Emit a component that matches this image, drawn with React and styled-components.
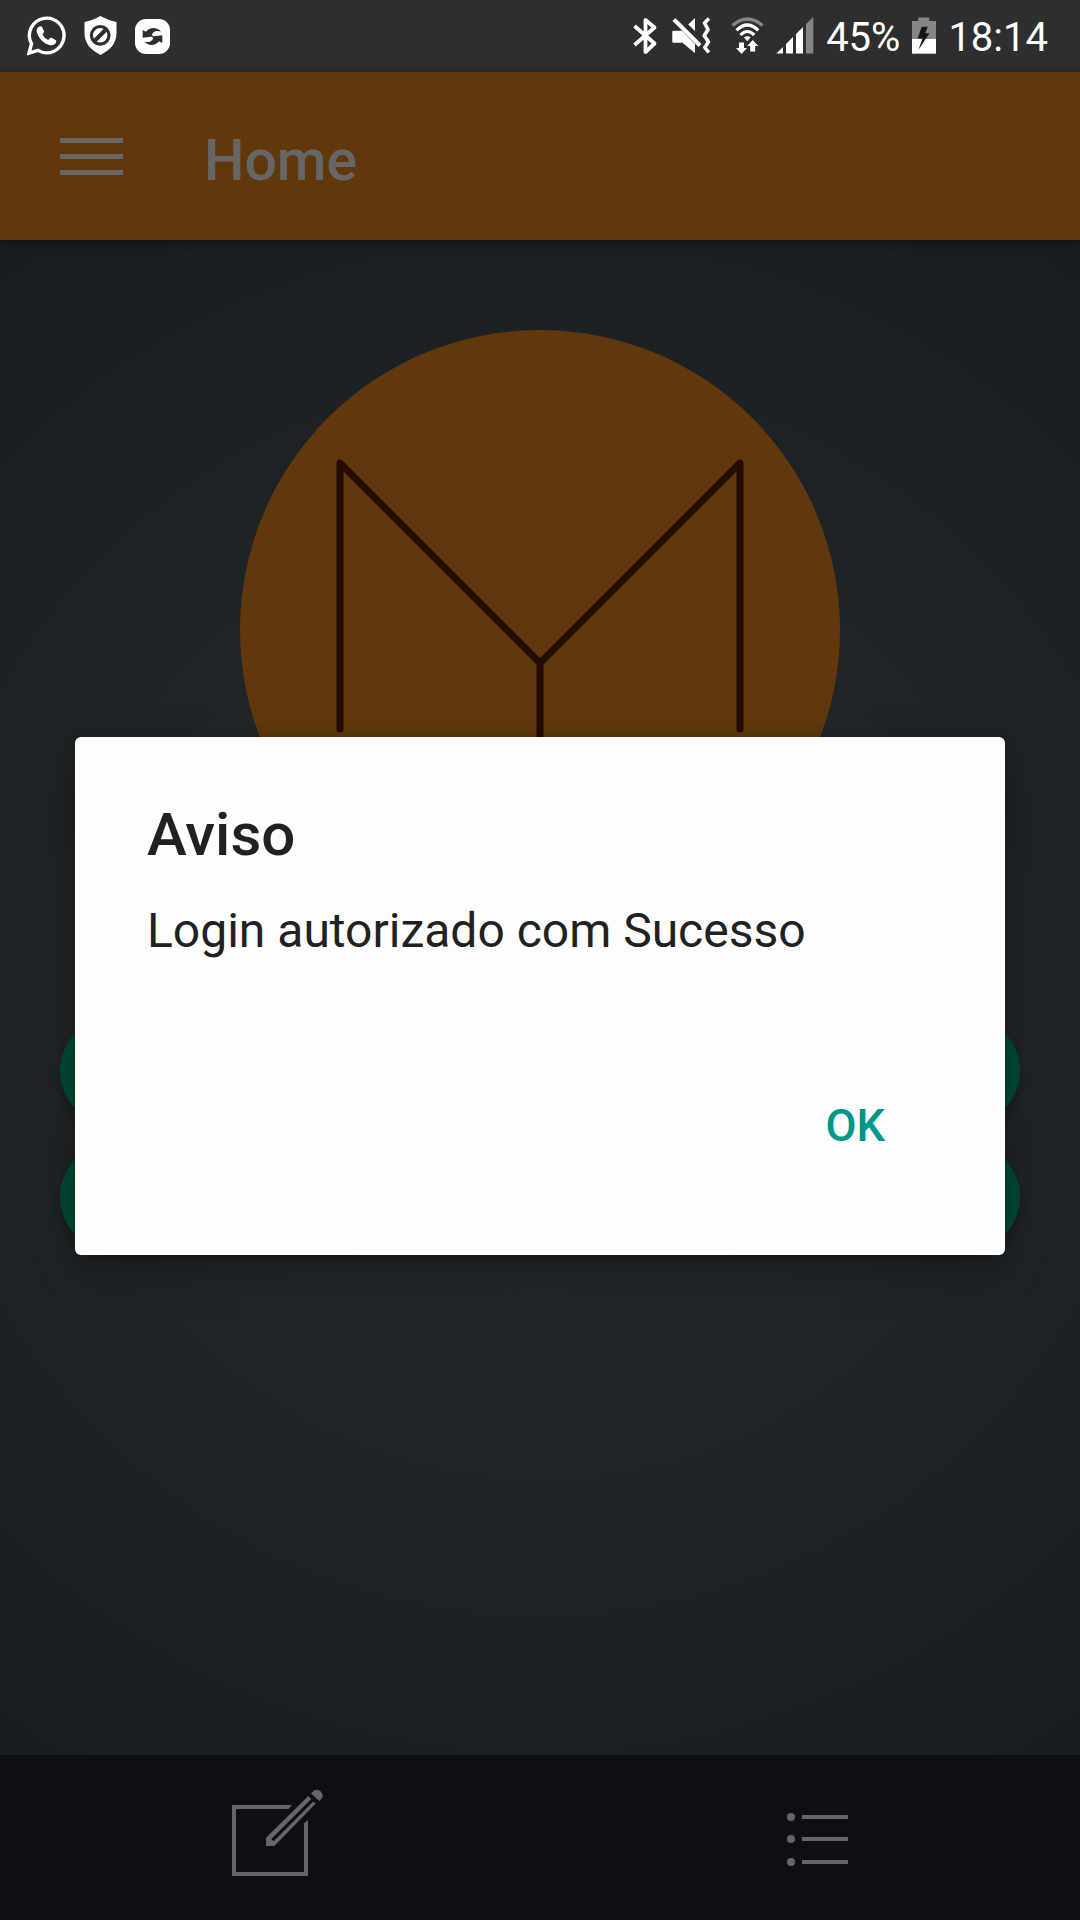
import React from "react";
import styled, { createGlobalStyle } from "styled-components";

const GlobalStyle = createGlobalStyle`
  * { box-sizing: border-box; }
  body { margin: 0; background: #181d20; font-family: Roboto, "Noto Sans", sans-serif; }
  button { font-family: inherit; border: 0; padding: 0; background: none; }
  svg { display: block; flex: none; }
`;

const Screen = styled.div`
  display: flex;
  flex-direction: column;
  min-height: 100vh;
`;

const StatusBar = styled.div`
  display: flex;
  justify-content: space-between;
  height: 72px;
  padding: 0 32px 0 27px;
  background: #2e2e2e;
  color: #fff;
`;

const StatusGroup = styled.div`
  display: flex;
  align-items: center;
  gap: ${(p) => p.$gap}px;
`;

const StatusText = styled.span`
  padding-top: 4px;
  font-size: 40px;
  line-height: 48px;
`;

const AppArea = styled.div`
  position: relative;
  flex: 1;
  display: flex;
  flex-direction: column;
`;

const Page = styled.div`
  flex: 1;
  display: flex;
  flex-direction: column;
  background: radial-gradient(circle at 50% 50%, #58646c 0, #525d65 400px, #3a464e 1000px);
`;

const Header = styled.header`
  display: flex;
  align-items: center;
  gap: 81px;
  height: 168px;
  padding: 0 60px;
  background: #f08c1e;
  box-shadow: 0 3px 12px rgba(0, 0, 0, 0.4);
`;

const MenuButton = styled.button`
  display: flex;
  flex-direction: column;
  gap: 11px;
  width: 63px;
`;

const MenuLine = styled.span`
  height: 5px;
  width: 100%;
  background: #fff;
`;

const PageTitle = styled.h1`
  margin: 0;
  padding-top: 10px;
  font-size: 57px;
  line-height: 64px;
  font-weight: 500;
  color: #fff;
`;

const Content = styled.main`
  flex: 1;
  display: flex;
  flex-direction: column;
  align-items: center;
  gap: 87px;
  padding: 90px 60px;
`;

const Actions = styled.div`
  display: flex;
  flex-direction: column;
  gap: 18px;
  width: 100%;
`;

const ActionButton = styled.button`
  height: 108px;
  width: 100%;
  border-radius: 54px;
  background: #00b488;
  box-shadow: 0 6px 10px rgba(0, 0, 0, 0.2);
`;

const TabBar = styled.nav`
  display: flex;
  height: 165px;
  background: #232732;
`;

const Tab = styled.button`
  flex: 1;
  display: flex;
  align-items: center;
  justify-content: center;
  color: #fff;
`;

const Scrim = styled.div`
  position: absolute;
  inset: 0;
  display: flex;
  align-items: center;
  justify-content: center;
  padding: 0 75px;
  background: rgba(0, 0, 0, 0.6);
`;

const Dialog = styled.section`
  flex: 1;
  display: flex;
  flex-direction: column;
  padding: 62px 72px 76px;
  border-radius: 6px;
  background: #fdfdfd;
  color: #212121;
  box-shadow: 0 16px 48px rgba(0, 0, 0, 0.2), 0 4px 16px rgba(0, 0, 0, 0.12);
`;

const DialogTitle = styled.h2`
  margin: 0 0 30px;
  font-size: 60px;
  line-height: 72px;
  font-weight: 500;
`;

const DialogText = styled.p`
  margin: 0 0 110px;
  font-size: 48px;
  line-height: 60px;
`;

const DialogButton = styled.button`
  align-self: flex-end;
  height: 108px;
  padding: 0 48px;
  font-size: 45px;
  font-weight: 500;
  color: #009688;
`;

const WhatsAppIcon = () => (
  <svg width="39" height="40" viewBox="0 0 39 40">
    <path d="M2 37.200 4.500 27.700A17.300 17.300 0 1 1 11 34.400Z" fill="none" stroke="#fff" strokeWidth="3.400" />
    <path
      fill="#fff"
      d="M12.500 10.500C9.500 11.500 9 15 10.500 18c2.500 6 7.500 10.500 13 11.300 2.800.3 5.300-1 5.800-3.800 0-.7-.2-1.100-.7-1.500l-4.100-2.200c-.7-.3-1.300-.1-1.700.4l-1.500 1.800c-2.600-1.200-4.700-3.300-5.800-5.800l1.300-1.600c.4-.6.4-1.100.2-1.600l-2-3.900c-.4-.8-1.500-1-2.500-.6Z"
    />
  </svg>
);

const ShieldIcon = () => (
  <svg width="33" height="40" viewBox="0 0 33 40">
    <path fill="#fff" d="M16.500 0C22 3 27 5 32.500 6v12c-.5 10-6.500 16-16 21C7 34 1 28 .5 18V6C6 5 11 3 16.500 0Z" />
    <circle cx="16.200" cy="19.300" r="8.800" fill="none" stroke="#2e2e2e" strokeWidth="3.200" />
    <path d="M10.500 25 22 13.500" stroke="#2e2e2e" strokeWidth="4" />
  </svg>
);

const SyncIcon = () => (
  <svg width="35" height="35" viewBox="0 0 35 35">
    <rect width="35" height="35" rx="11" fill="#fff" />
    <g fill="#2e2e2e">
      <path d="M7.700 11 11 12.800C14.500 8 22 7.800 26 12.800c-3.500-1.600-7-1.300-9.200 2.700l1.500 2-10.600 1.200Z" />
      <path d="M27.300 24 24 22.200C20.500 27 13 27.200 9 22.200c3.500 1.600 7 1.300 9.200-2.700l-1.500-2 10.600-1.200Z" />
    </g>
  </svg>
);

const BluetoothIcon = () => (
  <svg width="26" height="38" viewBox="0 0 26 38">
    <path d="M1.500 9 21.500 26.500 12.500 35V3L21.500 10.500 1.500 28" fill="none" stroke="#fff" strokeWidth="3.800" strokeLinejoin="round" />
  </svg>
);

const MuteIcon = () => (
  <svg width="48" height="38" viewBox="0 0 48 38">
    <g fill="#fff">
      <path d="M2.300 13.700H11L24 27v9.300L11.500 25.700H2.300q-1 0-1-1v-10q0-1 1-1Z" />
      <path d="M24 1v13l-6.800-6.500Z" />
    </g>
    <path d="M3 2.500 29 28.500" stroke="#fff" strokeWidth="4" />
    <path d="M38 1.500 33.500 6l3.500 6.500-3.800 6.300 4.300 6-3.700 5.700 4 5" fill="none" stroke="#fff" strokeWidth="3.600" strokeLinejoin="round" />
  </svg>
);

const WifiIcon = () => (
  <svg width="33" height="38" viewBox="0 0 33 38">
    <g fill="none" strokeWidth="3.200">
      <path d="M1.500 8.500Q16.300-4.500 31.500 8.500" stroke="#858585" />
      <path d="M5.500 13.300Q16.300 2.800 27.300 13.300" stroke="#fff" />
      <path d="M9.500 18Q16.300 11 23.300 18" stroke="#fff" />
    </g>
    <path fill="#fff" d="M13 20.500q3.300-2.600 6.600 0l-3.300 3.700Z" />
    <path fill="#fff" d="M8 25.500h5V31h3l-5.500 6L5 31h3Z" />
    <path fill="#fff" d="M19.200 34.500h5V29h3L21.700 23l-5.500 6h3Z" />
  </svg>
);

const SignalIcon = () => (
  <svg width="38" height="38" viewBox="0 0 38 38">
    <path fill="#fff" d="M.3 36.500 7 30v6.500ZM10 27l7-7v16.500h-7ZM20 17l7-7v26.500h-7Z" />
    <path fill="#858585" d="M30 7l7.300-7v36.500H30Z" />
  </svg>
);

const BatteryIcon = () => (
  <svg width="24" height="38" viewBox="0 0 24 38">
    <path fill="#858585" d="M6.300.5h10.900V4H24v18H0V4h6.300Z" />
    <path fill="#fff" d="M0 22h24v14.700H0Z" />
    <path fill="#151515" d="M9.700 9.700h6l-2.400 6.600h4.200L6.300 33l4.200-11.500H5.700Z" />
  </svg>
);

const LogoMark = () => (
  <svg width="600" height="600" viewBox="0 0 600 600">
    <circle cx="300" cy="300" r="300" fill="#f08c1e" />
    <path
      d="M100 399V133L300 333 500 133V399M300 333V470"
      fill="none"
      stroke="#5a2000"
      strokeWidth="7"
      strokeLinecap="round"
      strokeLinejoin="round"
    />
  </svg>
);

const ComposeIcon = () => (
  <svg width="108" height="108" viewBox="0 0 108 108" fill="currentColor">
    <path d="M16 21H76L72.700 25H20V88H88V39.500L92 36V92H16Z" />
    <path d="M50 62V53.700L92.300 12 95.300 15 55.300 55 57.600 57.300 97 17.700 100 19.300 58.300 62Z" />
    <path d="M95 9.500 98 6.500C101 4.500 105.500 7 106.500 10.500 107.300 13 106 14.500 103.300 17Z" />
  </svg>
);

const ListIcon = () => (
  <svg width="108" height="108" viewBox="0 0 108 108" fill="currentColor">
    {[33, 55, 78].map((y) => (
      <g key={y}>
        <circle cx="35" cy={y} r="4" />
        <rect x="46" y={y - 2} width="46" height="4" />
      </g>
    ))}
  </svg>
);

export default function App() {
  return (
    <Screen>
      <GlobalStyle />
      <StatusBar>
        <StatusGroup $gap={18}>
          <WhatsAppIcon />
          <ShieldIcon />
          <SyncIcon />
        </StatusGroup>
        <StatusGroup $gap={12}>
          <BluetoothIcon />
          <MuteIcon />
          <WifiIcon />
          <SignalIcon />
          <StatusText>45%</StatusText>
          <BatteryIcon />
          <StatusText>18:14</StatusText>
        </StatusGroup>
      </StatusBar>
      <AppArea>
        <Page inert>
          <Header>
            <MenuButton aria-label="Menu">
              <MenuLine />
              <MenuLine />
              <MenuLine />
            </MenuButton>
            <PageTitle>Home</PageTitle>
          </Header>
          <Content>
            <LogoMark />
            <Actions>
              <ActionButton aria-label="Entrar" />
              <ActionButton aria-label="Cadastrar" />
            </Actions>
          </Content>
          <TabBar>
            <Tab aria-label="Novo">
              <ComposeIcon />
            </Tab>
            <Tab aria-label="Lista">
              <ListIcon />
            </Tab>
          </TabBar>
        </Page>
        <Scrim>
          <Dialog role="alertdialog" aria-modal="true" aria-labelledby="aviso-titulo" aria-describedby="aviso-texto">
            <DialogTitle id="aviso-titulo">Aviso</DialogTitle>
            <DialogText id="aviso-texto">Login autorizado com Sucesso</DialogText>
            <DialogButton>OK</DialogButton>
          </Dialog>
        </Scrim>
      </AppArea>
    </Screen>
  );
}
